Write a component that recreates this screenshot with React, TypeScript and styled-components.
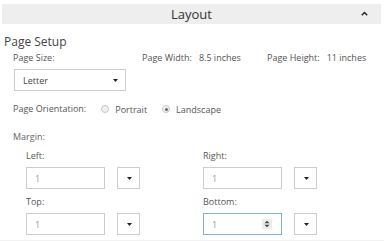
import React from 'react';
import styled, { createGlobalStyle } from 'styled-components';

const GlobalStyle = createGlobalStyle`
  html, body {
    margin: 0;
    padding: 0;
    background: #ffffff;
    font-family: 'Open Sans', 'Liberation Sans', sans-serif;
    color: #333333;
  }
`;

const Caret = () => (
  <svg width="5" height="3" viewBox="0 0 5 3">
    <path d="M0 0 H5 L2.5 3 Z" fill="#222" />
  </svg>
);

const Chevron = () => (
  <svg width="7" height="5" viewBox="0 0 7 5">
    <path d="M0.8 4.2 L3.5 1.4 L6.2 4.2" fill="none" stroke="#222" strokeWidth="1.4" />
  </svg>
);

const Spinner = () => (
  <svg width="10" height="10" viewBox="0 0 10 10">
    <rect width="10" height="10" fill="#ececec" />
    <path d="M2.5 4.2 L5 1.8 L7.5 4.2 Z M2.5 5.8 L5 8.2 L7.5 5.8 Z" fill="#444" />
  </svg>
);

const App = () => {
  return (
    <>
      <GlobalStyle />
      <S.Panel>
        <S.Header>
          <S.HeaderTitle>Layout</S.HeaderTitle>
          <S.HeaderToggle>
            <Chevron />
          </S.HeaderToggle>
        </S.Header>

        <S.SectionTitle>Page Setup</S.SectionTitle>

        <S.Body>
          <S.SizeRow>
            <S.Label>Page Size:</S.Label>
            <S.Info $left={142}>
              <span>Page Width:</span>
              <span>8.5 inches</span>
            </S.Info>
            <S.Info $left={267}>
              <span>Page Height:</span>
              <span>11 inches</span>
            </S.Info>
          </S.SizeRow>

          <S.Select>
            <span>Letter</span>
            <Caret />
          </S.Select>

          <S.OrientationRow>
            <S.Label>Page Orientation:</S.Label>
            <S.RadioOption>
              <S.Radio $checked={false} />
              <span>Portrait</span>
            </S.RadioOption>
            <S.RadioOption>
              <S.Radio $checked />
              <span>Landscape</span>
            </S.RadioOption>
          </S.OrientationRow>

          <S.MarginLabel>Margin:</S.MarginLabel>

          <S.MarginGrid>
            {[
              { name: 'Left:', focused: false },
              { name: 'Right:', focused: false },
              { name: 'Top:', focused: false },
              { name: 'Bottom:', focused: true },
            ].map((item) => (
              <S.MarginField key={item.name}>
                <S.FieldLabel>{item.name}</S.FieldLabel>
                <S.FieldRow>
                  <S.NumberInput $focused={item.focused}>
                    <span>1</span>
                    {item.focused && <Spinner />}
                  </S.NumberInput>
                  <S.UnitSelect>
                    <Caret />
                  </S.UnitSelect>
                </S.FieldRow>
              </S.MarginField>
            ))}
          </S.MarginGrid>
        </S.Body>
        <S.BottomEdge />
      </S.Panel>
    </>
  );
};

export default App;

const S = {
  Panel: styled.div`
    width: 384px;
    height: 241px;
    overflow: hidden;
    padding-top: 4px;
    box-sizing: border-box;
  `,

  Header: styled.div`
    position: relative;
    display: flex;
    align-items: center;
    justify-content: center;

    margin: 0 3px 0 2px;
    height: 20px;

    background-color: #eeeeee;
  `,

  HeaderTitle: styled.div`
    font-size: 13px;
    color: #333;
    line-height: 20px;
  `,

  HeaderToggle: styled.div`
    position: absolute;
    right: 13px;
    top: 7px;
    display: flex;
  `,

  SectionTitle: styled.div`
    margin: 10px 0 0 4px;

    font-size: 12px;
    line-height: 16px;
    color: #444;
  `,

  Body: styled.div`
    padding-left: 13px;
  `,

  SizeRow: styled.div`
    position: relative;
    display: flex;
    align-items: center;
    height: 14px;
    margin-top: 1px;
  `,

  Label: styled.span`
    font-size: 9px;
    line-height: 14px;
    color: #555;
  `,

  Info: styled.div<{ $left: number }>`
    position: absolute;
    top: 0;
    left: ${({ $left }) => $left - 13}px;
    display: flex;
    gap: 7px;

    font-size: 9px;
    line-height: 14px;
    color: #555;
  `,

  Select: styled.div`
    display: flex;
    align-items: center;
    justify-content: space-between;

    margin: 4px 0 0 1px;
    width: 112px;
    height: 22px;
    padding: 0 7px 0 8px;
    box-sizing: border-box;
    border: 1px solid #cccccc;

    font-size: 9px;
    color: #444;
  `,

  OrientationRow: styled.div`
    display: flex;
    align-items: center;

    margin-top: 11px;
    height: 14px;
  `,

  RadioOption: styled.div`
    display: flex;
    align-items: center;
    gap: 6px;

    margin-left: 15px;

    font-size: 9px;
    color: #555;

    &:first-of-type {
      margin-left: 15px;
    }
  `,

  Radio: styled.span<{ $checked: boolean }>`
    display: inline-flex;
    align-items: center;
    justify-content: center;

    width: 6px;
    height: 6px;
    border-radius: 50%;
    border: 1px solid #c8c8c8;
    background: #f0f0f0;

    &::after {
      content: '';
      width: 3px;
      height: 3px;
      border-radius: 50%;
      background: ${({ $checked }) => ($checked ? '#666' : 'transparent')};
    }
  `,

  MarginLabel: styled.div`
    margin-top: 14px;

    font-size: 9px;
    line-height: 14px;
    color: #666;
  `,

  MarginGrid: styled.div`
    display: grid;
    grid-template-columns: 177px 120px;
    row-gap: 6px;

    margin: 5px 0 0 13px;
  `,

  MarginField: styled.div`
    display: flex;
    flex-direction: column;
    gap: 4px;
  `,

  FieldLabel: styled.div`
    font-size: 9px;
    line-height: 14px;
    color: #555;
  `,

  FieldRow: styled.div`
    display: flex;
    gap: 12px;
  `,

  NumberInput: styled.div<{ $focused: boolean }>`
    display: flex;
    align-items: center;
    justify-content: space-between;

    width: 79px;
    height: 22px;
    padding: 0 9px 0 8px;
    box-sizing: border-box;
    border: 1px solid ${({ $focused }) => ($focused ? '#7fb0e0' : '#cccccc')};

    font-size: 9px;
    color: #999;
  `,

  UnitSelect: styled.div`
    display: flex;
    align-items: center;
    justify-content: flex-end;

    width: 23px;
    height: 22px;
    padding-right: 7px;
    box-sizing: border-box;
    border: 1px solid #cccccc;
  `,

  BottomEdge: styled.div`
    margin-top: 5px;
    height: 4px;
    background: #f2f2f2;
  `,
};
